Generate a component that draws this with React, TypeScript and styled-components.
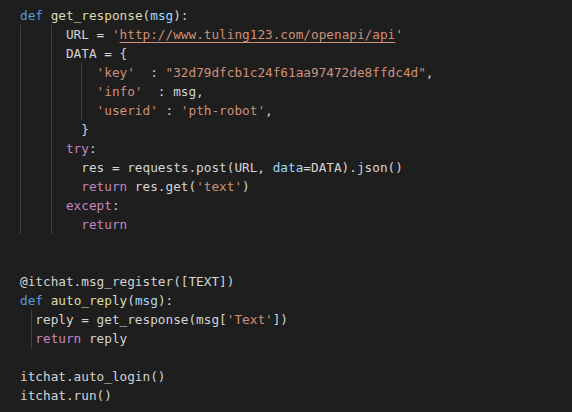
import React from "react";
import styled, { createGlobalStyle } from "styled-components";

const Global = createGlobalStyle`
  html, body {
    margin: 0;
    padding: 0;
    background: #1e1e1e;
    overflow: hidden;
  }
`;

type Kind = "kw" | "fn" | "param" | "str" | "link" | "ctrl" | "plain";

const colors: Record<Kind, string> = {
  kw: "#569cd6",
  fn: "#dcdcaa",
  param: "#9cdcfe",
  str: "#ce9178",
  link: "#ce9178",
  ctrl: "#c586c0",
  plain: "#d4d4d4",
};

const Editor = styled.div`
  width: 572px;
  height: 412px;
  box-sizing: border-box;
  padding: 6px 0 0 20px;
  background: #1e1e1e;
  font-family: "DejaVu Sans Mono", "Liberation Mono", monospace;
  font-size: 12.72px;
  color: #d4d4d4;
  display: flex;
  flex-direction: column;
`;

const Line = styled.div`
  height: 19px;
  line-height: 19px;
  display: flex;
  align-items: stretch;
  white-space: pre;
`;

const Indent = styled.span<{ $w: number; $guide: boolean }>`
  display: inline-block;
  width: ${(p) => p.$w}ch;
  flex: none;
  box-sizing: border-box;
  border-left: 1px solid ${(p) => (p.$guide ? "#404040" : "transparent")};
`;

const Tok = styled.span<{ $k: Kind }>`
  color: ${(p) => colors[p.$k]};
  ${(p) =>
    p.$k === "link"
      ? "text-decoration: underline; text-decoration-color: #ce9178; text-underline-offset: 3px;"
      : ""}
`;

type Seg = [number, boolean];
type T = [Kind, string];
type L = { ind: Seg[]; toks: T[] };

const g4: Seg = [4, true];
const g2: Seg = [2, true];

const lines: L[] = [
  { ind: [], toks: [["kw", "def"], ["plain", " "], ["fn", "get_response"], ["plain", "("], ["param", "msg"], ["plain", "):"]] },
  { ind: [g4, g2], toks: [["plain", "URL = "], ["str", "'"], ["link", "http://www.tuling123.com/openapi/api"], ["str", "'"]] },
  { ind: [g4, g2], toks: [["plain", "DATA = {"]] },
  { ind: [g4, g4, g2], toks: [["str", "'key'"], ["plain", "  : "], ["str", "\"32d79dfcb1c24f61aa97472de8ffdc4d\""], ["plain", ","]] },
  { ind: [g4, g4, g2], toks: [["str", "'info'"], ["plain", "  : msg,"]] },
  { ind: [g4, g4, g2], toks: [["str", "'userid'"], ["plain", " : "], ["str", "'pth-robot'"], ["plain", ","]] },
  { ind: [g4, g4], toks: [["plain", "}"]] },
  { ind: [g4, g2], toks: [["ctrl", "try"], ["plain", ":"]] },
  { ind: [g4, g4], toks: [["plain", "res = requests.post(URL, "], ["param", "data"], ["plain", "=DATA).json()"]] },
  { ind: [g4, g4], toks: [["ctrl", "return"], ["plain", " res.get("], ["str", "'text'"], ["plain", ")"]] },
  { ind: [g4, g2], toks: [["ctrl", "except"], ["plain", ":"]] },
  { ind: [g4, g4], toks: [["ctrl", "return"]] },
  { ind: [], toks: [] },
  { ind: [], toks: [] },
  { ind: [], toks: [["plain", "@itchat.msg_register([TEXT])"]] },
  { ind: [], toks: [["kw", "def"], ["plain", " "], ["fn", "auto_reply"], ["plain", "("], ["param", "msg"], ["plain", "):"]] },
  { ind: [[1.5, false], [0.5, true]], toks: [["plain", "reply = get_response(msg["], ["str", "'Text'"], ["plain", "])"]] },
  { ind: [[1.5, false], [0.5, true]], toks: [["ctrl", "return"], ["plain", " reply"]] },
  { ind: [], toks: [] },
  { ind: [], toks: [["plain", "itchat.auto_login()"]] },
  { ind: [], toks: [["plain", "itchat.run()"]] },
];

export default function App() {
  return (
    <>
      <Global />
      <Editor>
        {lines.map((l, i) => (
          <Line key={i}>
            {l.ind.map(([w, g], j) => (
              <Indent key={"i" + j} $w={w} $guide={g} />
            ))}
            <span>
              {l.toks.map(([k, t], j) => (
                <Tok key={j} $k={k}>
                  {t}
                </Tok>
              ))}
            </span>
          </Line>
        ))}
      </Editor>
    </>
  );
}
